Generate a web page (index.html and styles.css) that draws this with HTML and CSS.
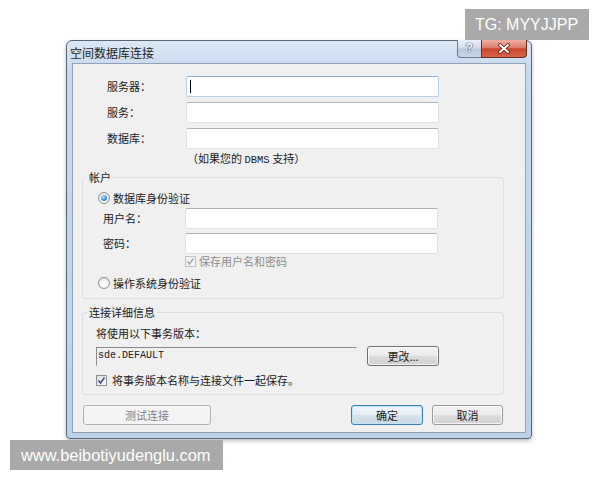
FILE: index.html
```html
<!DOCTYPE html>
<html lang="zh-CN">

<head>
	<meta charset="utf-8">
	<meta name="viewport" content="width=device-width, initial-scale=1">
	<title>空间数据库连接</title>
	<link rel="stylesheet" href="styles.css">
</head>

<body>
	<div class="watermark wm-top">TG: MYYJJPP</div>

	<div class="window">
		<div class="titlebar">
			<span class="title">空间数据库连接</span>
			<div class="caption-buttons">
				<span class="cap-help">?</span>
				<span class="cap-close">
					<svg width="14" height="11" viewBox="0 0 14 11">
						<path d="M3 2 L11 9 M11 2 L3 9" stroke="#5a1d14" stroke-width="3.6" stroke-linecap="round" />
						<path d="M3 2 L11 9 M11 2 L3 9" stroke="#ffffff" stroke-width="2" stroke-linecap="round" />
					</svg>
				</span>
			</div>
		</div>

		<div class="client">
			<div class="conn-grid">
				<span class="label">服务器：</span>
				<div class="field field-focus"><span class="caret"></span></div>
				<span class="label">服务：</span>
				<div class="field"></div>
				<span class="label">数据库：</span>
				<div class="field"></div>
			</div>
			<div class="hint">（如果您的 <span class="mono">DBMS</span> 支持）</div>

			<fieldset class="group">
				<legend>帐户</legend>
				<div class="option"><span class="radio checked"></span>数据库身份验证</div>
				<div class="cred-grid">
					<span class="label">用户名：</span>
					<div class="field"></div>
					<span class="label">密码：</span>
					<div class="field"></div>
				</div>
				<div class="save-row">
					<span class="check check-disabled">
						<svg width="9" height="9" viewBox="0 0 9 9">
							<path d="M1.5 4.5 L3.5 7 L7.5 1.5" fill="none" stroke="#a8a8a8" stroke-width="1.4" />
						</svg>
					</span>
					保存用户名和密码
				</div>
				<div class="option option-last"><span class="radio"></span>操作系统身份验证</div>
			</fieldset>

			<fieldset class="group group-details">
				<legend>连接详细信息</legend>
				<div class="ver-label">将使用以下事务版本：</div>
				<div class="ver-row">
					<div class="ver-field">sde.DEFAULT</div>
					<span class="btn btn-change">更改...</span>
				</div>
				<div class="save-version">
					<span class="check">
						<svg width="9" height="9" viewBox="0 0 9 9">
							<path d="M1.5 4.5 L3.5 7 L7.5 1.5" fill="none" stroke="#3a4f8c" stroke-width="1.6" />
						</svg>
					</span>
					将事务版本名称与连接文件一起保存。
				</div>
			</fieldset>

			<div class="dialog-buttons">
				<span class="btn btn-test btn-disabled">测试连接</span>
				<span class="spacer"></span>
				<span class="btn btn-ok btn-default">确定</span>
				<span class="btn btn-cancel">取消</span>
			</div>
		</div>
	</div>

	<div class="watermark wm-bottom">www.beibotiyudenglu.com</div>
</body>

</html>
```

FILE: styles.css
```css
* {
	box-sizing: border-box;
}

body {
	position: relative;
	width: 600px;
	height: 480px;
	margin: 0;
	overflow: hidden;
	background-color: #ffffff;
	color: #1a1a1a;
	font-family: "Noto Sans CJK SC", sans-serif;
	font-size: 11px;
}

/* watermarks over the screenshot */
.watermark {
	position: absolute;
	background-color: #a9a9a9;
	color: #ffffff;
	font-family: "Liberation Sans", Arial, sans-serif;
	z-index: 20;
}

.wm-top {
	top: 9px;
	left: 465px;
	width: 124px;
	height: 31px;
	padding-left: 10px;
	font-size: 16px;
	line-height: 31px;
}

.wm-bottom {
	top: 440px;
	left: 10px;
	width: 213px;
	height: 30px;
	padding-left: 11px;
	font-size: 16.4px;
	line-height: 30px;
}

/* window frame */
.window {
	display: flex;
	flex-direction: column;
	width: 466px;
	height: 399px;
	margin: 40px 0 0 66px;
	padding: 0 5px 5px;
	border: 1px solid #56657a;
	border-radius: 6px 6px 4px 4px;
	background: linear-gradient(#dce7f4, #c6d8ed 30px, #bdd2ea);
	box-shadow: 0 2px 4px rgba(0, 0, 0, 0.25);
}

.titlebar {
	display: flex;
	justify-content: space-between;
	height: 22px;
}

.title {
	margin-left: -2px;
	font-size: 12px;
	line-height: 24px;
	color: #1e1e1e;
}

.caption-buttons {
	display: flex;
	height: 18px;
	margin: -1px -1px 0 0;
}

.cap-help {
	width: 24px;
	height: 18px;
	border: 1px solid #6c7b90;
	border-top: none;
	border-right: none;
	border-radius: 0 0 0 4px;
	background: linear-gradient(#e9eff7, #d2dcea 48%, #b9c8db 52%, #c9d6e6);
	color: #ffffff;
	font: bold 12px "Liberation Sans", sans-serif;
	line-height: 17px;
	text-align: center;
	text-shadow: 0 0 1px #3b5373, 0 0 1px #3b5373, 0 0 1px #3b5373;
}

.cap-close {
	display: flex;
	align-items: center;
	justify-content: center;
	width: 46px;
	height: 18px;
	border: 1px solid #6b2a20;
	border-top: none;
	border-radius: 0 0 4px 0;
	background: linear-gradient(#eeb2a3, #dc7e66 45%, #c8442e 52%, #d8654a);
}

.client {
	flex: 1;
	border: 1px solid #8ea3bb;
	background-color: #f0f0f0;
}

/* connection fields */
.conn-grid {
	display: grid;
	grid-template-columns: 113px 253px;
	row-gap: 5px;
	padding-top: 12px;
}

.label {
	padding-left: 34px;
	line-height: 21px;
}

.field {
	height: 21px;
	border: 1px solid #dde2e8;
	border-top-color: #abb1ba;
	border-radius: 2px;
	background-color: #ffffff;
}

.field-focus {
	border-color: #b7d0ea;
	border-top-color: #8fb1d6;
}

.caret {
	display: block;
	width: 1px;
	height: 13px;
	margin: 3px 0 0 3px;
	background-color: #000000;
}

.hint {
	margin: 1px 0 0 114px;
	line-height: 16px;
}

.mono {
	font-family: "Liberation Mono", monospace;
	font-size: 10.5px;
}

/* group boxes */
.group {
	width: 422px;
	min-width: 0;
	margin: 2px 0 0 9px;
	padding: 0 0 7px;
	border: 1px solid #d5dfe5;
	border-radius: 3px;
}

.group legend {
	margin-left: 4px;
	padding: 0 2px;
	line-height: 14px;
}

.group-details {
	margin-top: 6px;
}

.option {
	display: flex;
	align-items: center;
	gap: 3px;
	margin-top: 6px;
	padding-left: 15px;
	line-height: 16px;
}

.option-last {
	margin-top: 7px;
}

.radio {
	display: flex;
	align-items: center;
	justify-content: center;
	width: 12px;
	height: 12px;
	border: 1px solid #8e8f8f;
	border-radius: 50%;
	background: radial-gradient(circle at 50% 60%, #ffffff 30%, #d6d6d6);
}

.radio.checked::after {
	content: "";
	width: 6px;
	height: 6px;
	border-radius: 50%;
	background: radial-gradient(circle at 40% 35%, #c6e9fc, #3d8fd6 55%, #1b5893);
}

.cred-grid {
	display: grid;
	grid-template-columns: 102px 253px;
	row-gap: 4px;
	margin-top: 2px;
}

.cred-grid .label {
	padding-left: 20px;
}

.save-row {
	display: flex;
	align-items: center;
	gap: 3px;
	margin: 0 0 0 102px;
	line-height: 14px;
	color: #8d8d8d;
}

.check {
	display: flex;
	align-items: center;
	justify-content: center;
	width: 11px;
	height: 11px;
	border: 1px solid #8e8f8f;
	background: linear-gradient(135deg, #dcdcdc, #fbfbfb);
}

.check-disabled {
	border-color: #c2c2c2;
	background: #f4f4f4;
}

.ver-label {
	margin: 7px 0 0 13px;
	line-height: 14px;
}

.ver-row {
	display: flex;
	align-items: center;
	gap: 10px;
	margin: 6px 0 0 13px;
}

.ver-field {
	width: 261px;
	height: 19px;
	padding-left: 1px;
	border: 1px solid;
	border-color: #8a8a8a #f0f0f0 #f0f0f0 #8a8a8a;
	font-family: "Liberation Mono", monospace;
	font-size: 10px;
	line-height: 16px;
}

.save-version {
	display: flex;
	align-items: center;
	gap: 5px;
	margin: 7px 0 0 13px;
	line-height: 14px;
}

/* buttons */
.btn {
	display: block;
	height: 20px;
	border: 1px solid #707070;
	border-radius: 3px;
	background: linear-gradient(#f3f3f3, #ebebeb 48%, #dddddd 52%, #d0d0d0);
	box-shadow: inset 0 0 0 1px rgba(255, 255, 255, 0.75);
	line-height: 18px;
	text-align: center;
}

.btn-change {
	width: 72px;
}

.dialog-buttons {
	display: flex;
	margin: 10px 22px 0 10px;
}

.spacer {
	flex: 1;
}

.btn-test {
	width: 128px;
}

.btn-ok {
	width: 72px;
	margin-right: 9px;
}

.btn-cancel {
	width: 71px;
	border-color: #9a9a9a;
}

.btn-default {
	border-color: #3c7fb1;
	background: linear-gradient(#f1f6fa, #e6eef4 48%, #d6e2eb 52%, #cbd9e4);
	box-shadow: inset 0 0 0 1px #bfe3f7;
}

.btn-disabled {
	border-color: #adb2b5;
	background: #f4f4f4;
	box-shadow: none;
	color: #838383;
}
```
